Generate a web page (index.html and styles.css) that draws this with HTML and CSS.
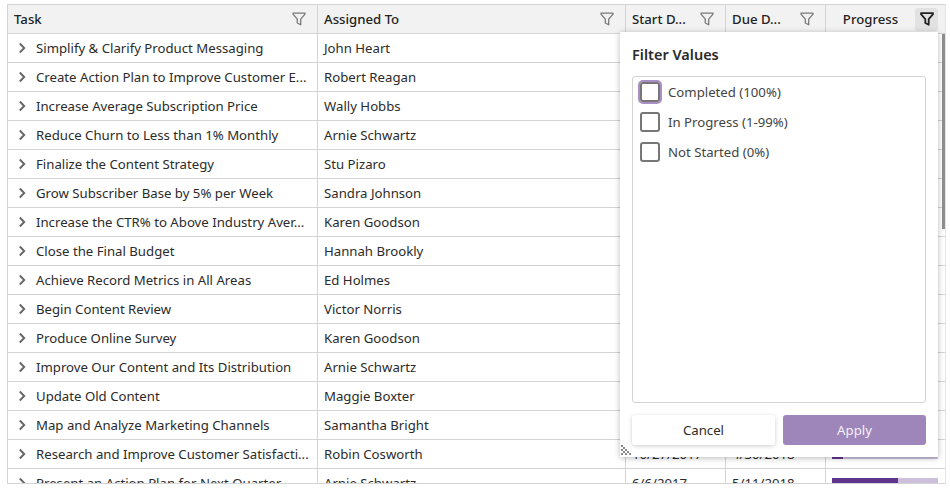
FILE: index.html
```html
<!DOCTYPE html>
<html lang="en">
<head>
    <meta charset="UTF-8">
    <title>Task Grid</title>
    <link rel="stylesheet" href="styles.css">
</head>
<body>

<svg class="defs" width="0" height="0">
    <symbol id="funnel" viewBox="0 0 14 14">
        <path d="M1 1.2h12v1L8.7 7.2v5.6L5.3 11V7.2L1 2.2z" fill="none" stroke="currentColor" stroke-linejoin="round"/>
    </symbol>
    <symbol id="chevron" viewBox="0 0 8 12">
        <path d="M1.8 1.5 6.2 6l-4.4 4.5" fill="none" stroke="currentColor" stroke-width="1.9"/>
    </symbol>
</svg>

<div class="grid">
    <div class="grid-head">
        <div class="hcell col-task"><span class="htext">Task</span><svg class="funnel"><use href="#funnel"/></svg></div>
        <div class="hcell col-name"><span class="htext">Assigned To</span><svg class="funnel"><use href="#funnel"/></svg></div>
        <div class="hcell col-date"><span class="htext">Start D...</span><svg class="funnel"><use href="#funnel"/></svg></div>
        <div class="hcell col-date"><span class="htext">Due D...</span><svg class="funnel"><use href="#funnel"/></svg></div>
        <div class="hcell col-prog"><span class="htext center">Progress</span><span class="funnel-btn"><svg class="funnel dark"><use href="#funnel"/></svg></span></div>
    </div>
    <div class="grid-body" id="gridBody"></div>
    <div class="scrollbar"></div>

    <div class="popup">
        <div class="popup-title">Filter Values</div>
        <div class="popup-list">
            <label class="option"><span class="check focused"></span>Completed (100%)</label>
            <label class="option"><span class="check"></span>In Progress (1-99%)</label>
            <label class="option"><span class="check"></span>Not Started (0%)</label>
        </div>
        <div class="popup-btns">
            <button class="btn">Cancel</button>
            <button class="btn primary">Apply</button>
        </div>
        <svg class="grip" width="12" height="12" viewBox="0 0 12 12">
            <path d="M1 0h2v2H1zM3 2h2v2H3zM1 4h2v2H1zM5 4h2v2H5zM3 6h2v2H3zM7 6h2v2H7zM1 8h2v2H1zM5 8h2v2H5zM9 8h2v2H9z" fill="#8a8a8a"/>
        </svg>
    </div>
</div>

<script>
    // the long titles are cut by the grid itself in the real app
    const rows = [
        ["Simplify & Clarify Product Messaging", "John Heart", "", "", 0],
        ["Create Action Plan to Improve Customer E...", "Robert Reagan", "", "", 0],
        ["Increase Average Subscription Price", "Wally Hobbs", "", "", 0],
        ["Reduce Churn to Less than 1% Monthly", "Arnie Schwartz", "", "", 0],
        ["Finalize the Content Strategy", "Stu Pizaro", "", "", 0],
        ["Grow Subscriber Base by 5% per Week", "Sandra Johnson", "", "", 0],
        ["Increase the CTR% to Above Industry Aver...", "Karen Goodson", "", "", 0],
        ["Close the Final Budget", "Hannah Brookly", "", "", 0],
        ["Achieve Record Metrics in All Areas", "Ed Holmes", "", "", 0],
        ["Begin Content Review", "Victor Norris", "", "", 0],
        ["Produce Online Survey", "Karen Goodson", "", "", 0],
        ["Improve Our Content and Its Distribution", "Arnie Schwartz", "", "", 0],
        ["Update Old Content", "Maggie Boxter", "", "", 0],
        ["Map and Analyze Marketing Channels", "Samantha Bright", "", "", 0],
        ["Research and Improve Customer Satisfacti...", "Robin Cosworth", "10/27/2017", "4/30/2018", 10],
        ["Present an Action Plan for Next Quarter", "Arnie Schwartz", "6/6/2017", "5/11/2018", 62]
    ];

    let html = "";
    rows.forEach(function (r) {
        html += '<div class="row">'
            + '<div class="cell col-task"><svg class="chevron"><use href="#chevron"/></svg><span class="ctext">' + r[0].replace("&", "&amp;") + '</span></div>'
            + '<div class="cell col-name"><span class="ctext">' + r[1] + '</span></div>'
            + '<div class="cell col-date"><span class="ctext">' + r[2] + '</span></div>'
            + '<div class="cell col-date"><span class="ctext">' + r[3] + '</span></div>'
            + '<div class="cell col-prog"><div class="bar"><div class="bar-fill" style="width:' + r[4] + '%"></div></div></div>'
            + '</div>';
    });
    document.getElementById("gridBody").innerHTML = html;
</script>
</body>
</html>
```

FILE: styles.css
```css
html, body { height: 100%; }
body { font-family: 'Noto Sans', sans-serif; font-size: 13.2px; color: #2b2b2b; background: white; margin: 0; padding: 4px 4px 5px 7px; box-sizing: border-box; overflow: hidden; }
.defs { display: block; height: 0; }
.grid { position: relative; height: 480px; border: 1px solid #d4d4d4; border-right-color: #e4e4e4; box-sizing: border-box; overflow: hidden; }
.grid-head { display: flex; height: 29px; background: #f2f2f2; border-bottom: 1px solid #d4d4d4; box-sizing: border-box; }
.grid-body { height: 450px; overflow: hidden; }
.row { display: flex; height: 29px; border-bottom: 1px solid #d4d4d4; box-sizing: border-box; }
.col-task { width: 310px; }
.col-name { width: 308px; }
.col-date { width: 100px; }
.col-prog { flex: 1; min-width: 0; }
.hcell { display: flex; align-items: center; padding: 0 6px; border-right: 1px solid #d4d4d4; box-sizing: border-box; font-weight: 500; color: #222; }
.hcell:last-child { border-right: none; padding-right: 0; }
.htext { flex: 1; white-space: nowrap; }
.center { text-align: center; padding-right: 6px; }
.funnel { width: 14px; height: 14px; color: #7a7a7a; margin-right: 5px; stroke-width: 1.3; }
.funnel.dark { color: #222; margin: 0; stroke-width: 1.8; }
.funnel-btn { display: flex; align-items: center; justify-content: center; width: 23px; height: 23px; background: #e2e2e2; border-radius: 3px; margin-right: 7px; }
.cell { display: flex; align-items: center; padding: 0 6px; border-right: 1px solid #d4d4d4; box-sizing: border-box; min-width: 0; }
.cell:last-child { border-right: none; }
.ctext { white-space: nowrap; }
.chevron { flex: none; width: 8px; height: 12px; color: #666; margin: 0 10px 0 4px; }
.bar { width: 100%; height: 10px; background: #cdc0dc; margin-right: 1px; }
.bar-fill { height: 100%; background: #5f3590; }
.scrollbar { position: absolute; top: 29px; right: 0; width: 3px; height: 195px; background: #8f8f8f; }
.popup { position: absolute; left: 612px; top: 27px; width: 318px; height: 425px; padding: 12px; box-sizing: border-box; background: white; box-shadow: 0 1px 6px rgba(0,0,0,0.28); display: flex; flex-direction: column; }
.popup-title { font-size: 14.5px; font-weight: 600; line-height: 20px; margin: 0 0 12px; color: #2b2b2b; }
.popup-list { flex: 1; border: 1px solid #d4d4d4; border-radius: 3px; padding: 0 7px; }
.option { display: flex; align-items: center; height: 30px; color: #444; }
.check { width: 16px; height: 16px; border: 2px solid #777; border-radius: 3px; margin-right: 8px; }
.check.focused { box-shadow: 0 0 0 2px #a98fc4; }
.popup-btns { display: flex; gap: 8px; margin-top: 12px; }
.btn { flex: 1; height: 30px; border: none; border-radius: 3px; background: white; font-family: inherit; font-size: 13.2px; color: #2b2b2b; box-shadow: 0 1px 4px rgba(0,0,0,0.2); }
.btn.primary { background: #9f86ba; color: #f4f0f8; box-shadow: none; }
.grip { position: absolute; left: 0; bottom: 0; }
```
